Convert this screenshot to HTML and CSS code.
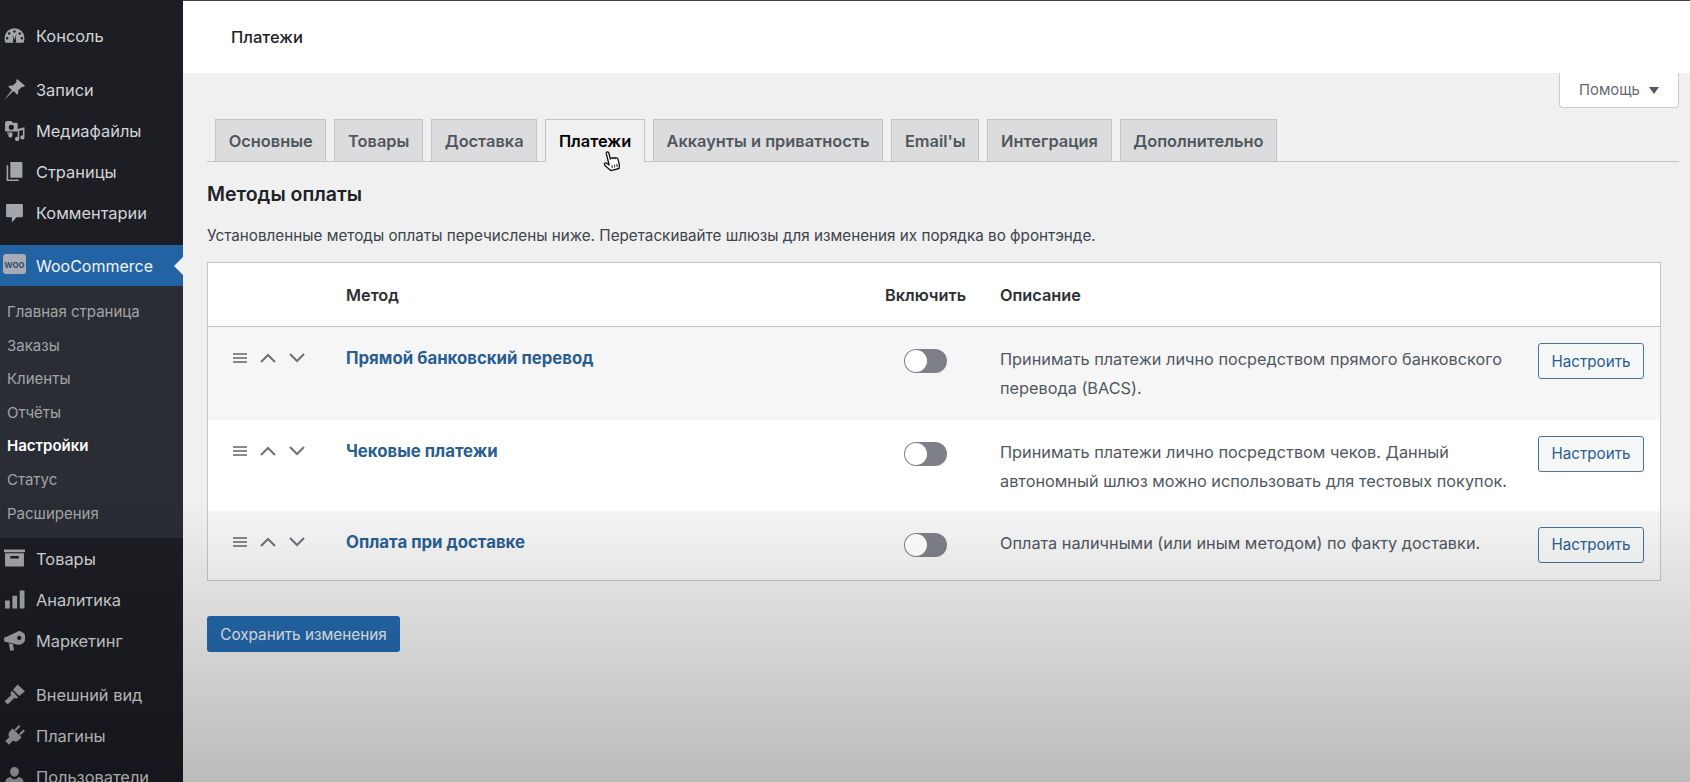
FILE: index.html
```html
<!DOCTYPE html>
<html lang="ru">
<head>
    <meta charset="UTF-8">
    <meta name="viewport" content="width=device-width, initial-scale=1.0">
    <title>Платежи</title>
    <link rel="stylesheet" href="styles.css">
</head>
<body>
    <div class="layout">
        <!-- Admin menu -->
        <nav class="sidebar">
            <ul class="menu menu-top">
                <li><svg viewBox="0 0 20 20"><path d="M10 3a9.500 9.500 0 0 0-9.500 9.500c0 1.600.4 3 1 4.300h17c.6-1.300 1-2.700 1-4.300A9.500 9.500 0 0 0 10 3zm0 2a1.200 1.200 0 1 1 0 2.400A1.200 1.200 0 0 1 10 5zM5 7a1.200 1.200 0 1 1 0 2.400A1.200 1.200 0 0 1 5 7zm10 0a1.200 1.200 0 1 1 0 2.400A1.200 1.200 0 0 1 15 7zM3 11.500a1.200 1.200 0 1 1 0 2.400 1.200 1.200 0 0 1 0-2.400zm14 0a1.200 1.200 0 1 1 0 2.400 1.200 1.200 0 0 1 0-2.400zM11.800 8l-.6 6.200a1.600 1.600 0 1 1-2.400 0L8.200 9.500l1.600 4 .4-.1z" fill-rule="evenodd"/></svg>Консоль</li>
            </ul>
            <ul class="menu menu-posts">
                <li><svg viewBox="0 0 20 20"><path d="M12.500 0l7.500 6.500-1.500 1.200-1.200-.4-3.800 3.700c.5 1.600.1 3-.9 4L9 11.500 0 20l7.500-9.500L4 7.200c1-1 2.500-1.300 4.100-.8L12 2.800l-.5-1.300z"/></svg>Записи</li>
                <li><svg viewBox="0 0 20 20"><path d="M3 1h4l1.200 1.500H12a1 1 0 0 1 1 1V10a1 1 0 0 1-1 1H2a1 1 0 0 1-1-1V3a2 2 0 0 1 2-2zm4 3.500A2.500 2.500 0 1 0 7 9.500a2.500 2.500 0 0 0 0-5zM19.500 7v9.500a2 2 0 1 1-1.500-1.900V9.500l-3.500.8v7.700a2 2 0 1 1-1.500-1.900V8.500zM3 12h5v2.500a2 2 0 1 1-3-1.500H3z" fill-rule="evenodd"/></svg>Медиафайлы</li>
                <li><svg viewBox="0 0 20 20"><path d="M6 1h11.500v15H6zM4 4v13.500h10V19H2.500V4z"/></svg>Страницы</li>
                <li><svg viewBox="0 0 20 20"><path d="M3 2h14a1 1 0 0 1 1 1v10.500a1 1 0 0 1-1 1h-5L7.500 19.500v-5H3a1 1 0 0 1-1-1V3a1 1 0 0 1 1-1z"/></svg>Комментарии</li>
            </ul>
            <ul class="menu menu-shop">
                <li class="current"><span class="woo-logo">woo</span>WooCommerce</li>
            </ul>
            <ul class="submenu">
                <li>Главная страница</li>
                <li>Заказы</li>
                <li>Клиенты</li>
                <li>Отчёты</li>
                <li class="active">Настройки</li>
                <li>Статус</li>
                <li>Расширения</li>
            </ul>
            <ul class="menu menu-products">
                <li><svg viewBox="0 0 20 20"><path d="M0 1.500h20V4H0zM1 5h18v12.500H1zm5 2.500V10h8V7.500z" fill-rule="evenodd"/></svg>Товары</li>
                <li><svg viewBox="0 0 20 20"><path d="M1 11h4.500v7.500H1zM8 6.500h4.500v12H8zM15 1.500h4.500v17H15z"/></svg>Аналитика</li>
                <li><svg viewBox="0 0 20 20"><path d="M14 1a6.500 6.500 0 0 1 0 13c-.6 0-1.200-.1-1.700-.3L2.500 11.500a2.500 2.500 0 0 1 0-5l9.700-4.700C12.800 1.300 13.400 1 14 1zm.5 4.500a2 2 0 1 0 0 4 2 2 0 0 0 0-4zM4.500 12.500l4 1 1 6H6z" fill-rule="evenodd"/></svg>Маркетинг</li>
            </ul>
            <ul class="menu menu-tools">
                <li><svg viewBox="0 0 20 20"><path d="M13 .5l7 6.500-5.500 4.500-6-6zM7.500 6.500l6 6-2 1.500-1.500-1-6.500 6.500-3-3L7 10.500l-1-1.500z"/></svg>Внешний вид</li>
                <li><svg viewBox="0 0 20 20"><g transform="rotate(45 10 10)"><path d="M6 0h2v6H6zM12 0h2v6h-2zM4 6.500h12v3.500c0 2.500-1.500 4-3.500 4.700V20h-5v-5.300C5.500 14 4 12.500 4 10z"/></g></svg>Плагины</li>
                <li><svg viewBox="0 0 20 20"><path d="M10 1a4.200 4.200 0 0 1 4.200 4.200c0 2.300-1.700 5-4.200 5s-4.200-2.700-4.200-5A4.200 4.200 0 0 1 10 1zM6.300 10.500C7.300 12 8.700 12.500 10 12.500s2.700-.5 3.700-2c2.300.3 4.800 2 4.800 4V20h-17v-5.500c0-2 2.500-3.700 4.800-4z"/></svg>Пользователи</li>
            </ul>
        </nav>

        <div class="main">
            <header class="topbar">Платежи</header>

            <div class="content">
                <div class="help-row">
                    <button class="help-tab" type="button">Помощь<span class="caret"></span></button>
                </div>

                <div class="tabs">
                    <a class="tab">Основные</a>
                    <a class="tab">Товары</a>
                    <a class="tab">Доставка</a>
                    <a class="tab tab-active">Платежи</a>
                    <a class="tab">Аккаунты и приватность</a>
                    <a class="tab">Email'ы</a>
                    <a class="tab">Интеграция</a>
                    <a class="tab">Дополнительно</a>
                    <!-- mouse pointer -->
                    <svg class="hand" viewBox="0 0 20 24"><g transform="rotate(-14 10 12)"><path d="M6.500 2.500c0-1.800 2.600-1.800 2.600 0v6.200c.3-1.300 2.500-1.200 2.600.3.300-1.100 2.400-1 2.500.5.400-.8 2.300-.6 2.300 1.100v4.900c0 2-.5 3-1.300 4.500H6.800c-.8-1.500-2.200-3-3.800-5.400-.9-1.400-1.300-2.500-.5-3.100 1-.7 2.300.4 4 2.700z" fill="#fff" stroke="#111" stroke-width="1.300" stroke-linejoin="round"/><path d="M9 15v3M11.500 15v3M14 15v3" stroke="#333" stroke-width="1.100" fill="none"/></g></svg>
                </div>

                <h2 class="section-title">Методы оплаты</h2>
                <p class="section-desc">Установленные методы оплаты перечислены ниже. Перетаскивайте шлюзы для изменения их порядка во фронтэнде.</p>

                <table class="gateways">
                    <thead>
                        <tr>
                            <th class="col-sort"></th>
                            <th class="col-name">Метод</th>
                            <th class="col-status">Включить</th>
                            <th class="col-desc">Описание</th>
                            <th class="col-action"></th>
                        </tr>
                    </thead>
                    <tbody>
                        <tr class="row-alt row-first">
                            <td class="col-sort"><div class="sort-icons"><span class="drag"></span><svg class="chev" viewBox="0 0 16 10"><path d="M1 9l7-7 7 7"/></svg><svg class="chev" viewBox="0 0 16 10"><path d="M1 1l7 7 7-7"/></svg></div></td>
                            <td class="col-name"><a class="method-link">Прямой банковский перевод</a></td>
                            <td class="col-status"><span class="toggle"></span></td>
                            <td class="col-desc">Принимать платежи лично посредством прямого банковского перевода (BACS).</td>
                            <td class="col-action"><button class="setup-btn" type="button">Настроить</button></td>
                        </tr>
                        <tr class="row-second">
                            <td class="col-sort"><div class="sort-icons"><span class="drag"></span><svg class="chev" viewBox="0 0 16 10"><path d="M1 9l7-7 7 7"/></svg><svg class="chev" viewBox="0 0 16 10"><path d="M1 1l7 7 7-7"/></svg></div></td>
                            <td class="col-name"><a class="method-link">Чековые платежи</a></td>
                            <td class="col-status"><span class="toggle"></span></td>
                            <td class="col-desc">Принимать платежи лично посредством чеков. Данный автономный шлюз можно использовать для тестовых покупок.</td>
                            <td class="col-action"><button class="setup-btn" type="button">Настроить</button></td>
                        </tr>
                        <tr class="row-alt row-third">
                            <td class="col-sort"><div class="sort-icons"><span class="drag"></span><svg class="chev" viewBox="0 0 16 10"><path d="M1 9l7-7 7 7"/></svg><svg class="chev" viewBox="0 0 16 10"><path d="M1 1l7 7 7-7"/></svg></div></td>
                            <td class="col-name"><a class="method-link">Оплата при доставке</a></td>
                            <td class="col-status"><span class="toggle"></span></td>
                            <td class="col-desc">Оплата наличными (или иным методом) по факту доставки.</td>
                            <td class="col-action"><button class="setup-btn" type="button">Настроить</button></td>
                        </tr>
                    </tbody>
                </table>

                <button class="save-btn" type="button">Сохранить изменения</button>
            </div>
        </div>
    </div>
    <div class="shade"></div>
</body>
</html>
```

FILE: styles.css
```css
html, body {
    height: 100%;
}

body {
    margin: 0;
    overflow: hidden;
    font-family: Inter, "Noto Sans", sans-serif;
    background-color: #f0f0f1;
    color: #3c434a;
}

ul {
    list-style: none;
    margin: 0;
    padding: 0;
}

.layout {
    display: flex;
    height: 782px;
    overflow: hidden;
}

/* admin menu */
.sidebar {
    width: 183px;
    flex-shrink: 0;
    background-color: #1c1e24;
    color: #d4d5d7;
    font-size: 16.400px;
}

.menu li {
    display: flex;
    align-items: center;
    height: 41px;
    padding-left: 36px;
    position: relative;
}

.menu li svg {
    position: absolute;
    left: 4px;
    top: 10px;
    width: 21px;
    height: 21px;
    fill: #a2a5aa;
}

.menu-top {
    padding-top: 15px;
}

.menu-posts {
    padding-top: 13px;
}

.menu-shop {
    padding-top: 12px;
}

.menu .current {
    background-color: #2163a3;
    color: #f2f5f8;
    font-size: 16px;
}

/* notch pointing at the content */
.menu .current::after {
    content: "";
    position: absolute;
    right: 0;
    top: 12px;
    border: 9px solid transparent;
    border-right-color: #f0f0f1;
    border-left: 0;
}

.woo-logo {
    position: absolute;
    left: 3px;
    top: 9px;
    width: 23px;
    height: 20px;
    border-radius: 3px;
    background-color: #a9adb3;
    color: #2d4f77;
    font-size: 10px;
    font-weight: 600;
    line-height: 20px;
    text-align: center;
}

.submenu {
    background-color: #2a2d33;
    padding: 9px 0 8px;
    font-size: 15px;
    color: #a3a5a8;
}

.submenu li {
    height: 33.600px;
    line-height: 33.600px;
    padding-left: 7px;
}

.submenu .active {
    color: #fff;
    font-weight: 600;
}

.menu-tools {
    padding-top: 13px;
}

/* main area */
.main {
    flex: 1;
    min-width: 0;
    border-top: 1px solid #444;
}

.topbar {
    height: 72px;
    padding-left: 48px;
    line-height: 72px;
    background-color: #fff;
    color: #1d2327;
    font-size: 16.500px;
    font-weight: 500;
}

.content {
    padding: 0 29px 0 24px;
}

.help-row {
    display: flex;
    justify-content: flex-end;
    height: 46px;
}

.help-tab {
    width: 120px;
    height: 35px;
    margin: 0 -18px 0 0;
    padding: 0;
    border: 1px solid #c9cbcf;
    border-top: 0;
    border-radius: 0 0 4px 4px;
    background-color: #fff;
    color: #646970;
    font-family: inherit;
    font-size: 14.800px;
}

.caret {
    display: inline-block;
    margin-left: 9px;
    vertical-align: 1px;
    border: 5px solid transparent;
    border-top: 7px solid #50575e;
    border-bottom: 0;
}

.tabs {
    display: flex;
    gap: 8px;
    height: 42px;
    padding-left: 8px;
    margin-right: -18px;
    border-bottom: 1px solid #c3c4c7;
    position: relative;
}

.tab {
    box-sizing: border-box;
    height: 42px;
    padding: 0 12.700px;
    border: 1px solid #c3c4c7;
    border-bottom: 0;
    background-color: #dcdcde;
    color: #50575e;
    font-size: 16.380px;
    font-weight: 600;
    line-height: 42px;
}

.tab-active {
    height: 43px;
    background-color: #f0f0f1;
    color: #000;
}

.hand {
    position: absolute;
    left: 395px;
    top: 31px;
    width: 20px;
    height: 24px;
}

.section-title {
    margin: 20px 0 0;
    color: #1d2327;
    font-size: 19.500px;
    font-weight: 600;
    line-height: 24px;
}

.section-desc {
    margin: 20px 0 0;
    font-size: 15.250px;
    line-height: 20px;
}

/* gateways table */
.gateways {
    width: 100%;
    margin-top: 16px;
    table-layout: fixed;
    border-collapse: collapse;
    border: 1px solid #c3c4c7;
    background-color: #fff;
    font-size: 16.300px;
}

.gateways th {
    height: 63px;
    padding: 0;
    border-bottom: 1px solid #c3c4c7;
    color: #2b3035;
    font-size: 16.300px;
    font-weight: 600;
    text-align: left;
}

.gateways td {
    padding: 0;
    vertical-align: top;
}

.row-alt {
    background-color: #f6f6f7;
}

.row-first {
    height: 93px;
}

.row-second {
    height: 91px;
}

.row-third {
    height: 70px;
}

.col-sort {
    width: 138px;
}

.col-name {
    width: 539px;
}

.col-status {
    width: 115px;
}

.col-action {
    width: 131px;
}

.gateways td.col-desc {
    padding-top: 18px;
    line-height: 29px;
    color: #50575e;
}

.gateways td.col-name {
    padding-top: 19px;
    line-height: 24px;
}

.sort-icons {
    display: flex;
    align-items: center;
    gap: 13px;
    height: 16px;
    padding: 23px 0 0 25px;
}

.drag {
    display: block;
    width: 14px;
    height: 2px;
    background-color: #85888c;
    box-shadow: 0 4px 0 #85888c, 0 -4px 0 #85888c;
}

.chev {
    display: block;
    width: 16px;
    height: 10px;
    fill: none;
    stroke: #6d7277;
    stroke-width: 2;
}

.method-link {
    color: #2a5e92;
    font-size: 16.800px;
    font-weight: 700;
}

.toggle {
    display: block;
    box-sizing: border-box;
    width: 43px;
    height: 24px;
    margin: 22px 0 0 19px;
    border-radius: 12px;
    background-color: #7d8087;
    position: relative;
}

.toggle::before {
    content: "";
    position: absolute;
    left: 1px;
    top: 1px;
    width: 22px;
    height: 22px;
    border-radius: 50%;
    background-color: #fff;
}

.setup-btn {
    display: block;
    box-sizing: border-box;
    width: 106px;
    height: 36px;
    margin: 16px 0 0 9px;
    padding: 0;
    border: 1px solid #4a7299;
    border-radius: 3px;
    background-color: #f6f7f7;
    color: #2a5e92;
    font-family: inherit;
    font-size: 15.200px;
}

.save-btn {
    display: block;
    box-sizing: border-box;
    width: 193px;
    height: 36px;
    margin-top: 35px;
    padding: 0;
    border: 0;
    border-radius: 3px;
    background-color: #2569ad;
    color: #e8ecf2;
    font-family: inherit;
    font-size: 15.300px;
}

/* dark fade along the bottom edge */
.shade {
    position: fixed;
    left: 0;
    right: 0;
    top: 500px;
    bottom: 0;
    background: linear-gradient(to bottom, rgba(0, 0, 0, 0), rgba(0, 0, 0, 0.22));
    pointer-events: none;
}
```
